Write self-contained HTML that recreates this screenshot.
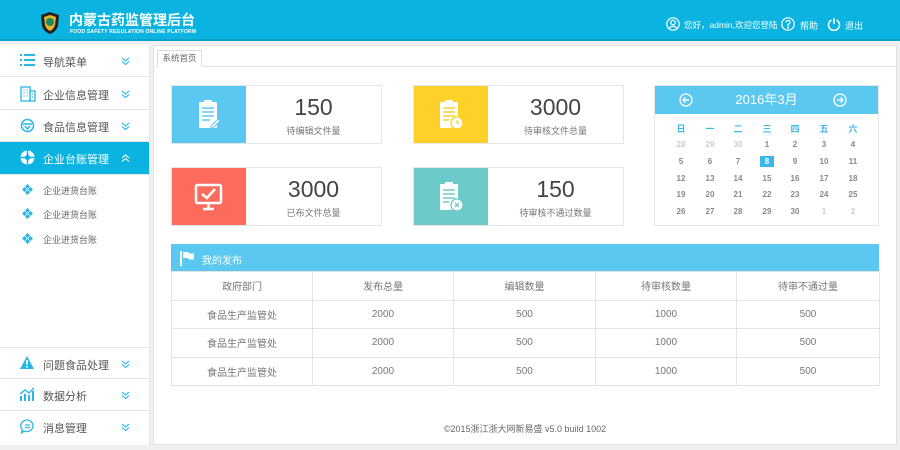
<!DOCTYPE html>
<html><head><meta charset="utf-8"><style>
*{margin:0;padding:0;box-sizing:border-box}
body{width:900px;height:450px;background:#f0f0f0;font-family:"Liberation Sans","Noto Sans CJK SC",sans-serif;position:relative;overflow:hidden;color:#555}
.hd{position:absolute;left:0;top:0;width:900px;height:41px;background:#0bb4e0;border-bottom:2px solid #0aa3cc}
.abs{position:absolute}
.side{position:absolute;left:0;top:45px;width:150px;height:400px;background:#fff;border-right:1px solid #e3e3e3}
.mi{position:absolute;left:0;width:149px;height:32px;border-bottom:1px solid #e3e3e3;font-size:11px;color:#555}
.mi .t{position:absolute;left:43px;top:9px}
.mi .ch{position:absolute;left:121px;top:12px}
.mi .ic{position:absolute;left:20px;top:8px}
.sub{position:absolute;left:43px;font-size:9px;color:#666}
.dia{position:absolute;left:22px;width:11px;height:11px}
.main{position:absolute;left:153px;top:45px;width:744px;height:400px;background:#fff;border:1px solid #e3e3e3}
.card{position:absolute;width:211px;height:59px;border:1px solid #e6e6e6;background:#fff}
.card .i{position:absolute;left:0;top:0;width:74px;height:57px}
.card .n{position:absolute;left:74px;right:0;top:8px;text-align:center;font-size:23px;color:#444}
.card .l{position:absolute;left:74px;right:0;top:38px;text-align:center;font-size:9px;color:#777}
table{position:absolute;left:171px;top:271px;width:708px;border-collapse:collapse;font-size:10px;color:#777;table-layout:fixed}
td{border:1px solid #e3e3e3;text-align:center;height:28.5px;vertical-align:middle}
.cal{position:absolute;left:654px;top:85px;width:225px;height:141px;border:1px solid #e6e6e6}
.cal .h{height:28px;background:#5bc8f0;color:#fff;font-size:13px;text-align:center;line-height:28px;position:relative}
.cg{position:absolute;left:0;font-size:8px;color:#888;font-weight:bold}
.cg span{position:absolute;width:28px;margin-left:-14px;text-align:center}
</style></head><body>
<svg width="0" height="0" style="position:absolute"><defs>
<symbol id="dn" viewBox="0 0 9 8"><path d="M1 1l3.5 3 3.5-3M1 4.5l3.5 3 3.5-3" fill="none" stroke="#29b6e6" stroke-width="1.1"/></symbol>
<symbol id="dm" viewBox="0 0 11 11"><g fill="#29b6e6"><path d="M5.5 0L8 2.5 5.5 5 3 2.5Z"/><path d="M5.5 6L8 8.5 5.5 11 3 8.5Z"/><path d="M2.5 3L5 5.5 2.5 8 0 5.5Z"/><path d="M8.5 3L11 5.5 8.5 8 6 5.5Z"/></g></symbol>
</defs></svg>
<div class="hd">
 <svg class="abs" style="left:40px;top:11px" width="20" height="24" viewBox="0 0 20 24"><path d="M10 1 L19 4 L18 15 Q16 21 10 23 Q4 21 2 15 L1 4Z" fill="#222"/><path d="M10 4 L16 6 L15 14 Q14 18 10 20 Q6 18 5 14 L4 6Z" fill="#e8b32a"/><circle cx="10" cy="11" r="4" fill="#1a8a5a"/></svg>
 <div class="abs" style="left:69px;top:10px;color:#fff;font-size:14px;font-weight:bold">内蒙古药监管理后台</div>
 <div class="abs" style="left:70px;top:29px;color:#fff;font-size:5px;font-weight:bold;letter-spacing:.2px">FOOD SAFETY REGULATION ONLINE PLATFORM</div>
 <svg class="abs" style="left:666px;top:17px" width="14" height="14" viewBox="0 0 14 14" fill="none" stroke="#fff" stroke-width="1.2"><circle cx="7" cy="7" r="6.2"/><circle cx="7" cy="5.5" r="2.3"/><path d="M3 11.5 Q7 7 11 11.5"/></svg>
 <div class="abs" style="left:684px;top:19px;color:#fff;font-size:8.5px">您好，admin,欢迎您登陆</div>
 <svg class="abs" style="left:781px;top:17px" width="14" height="14" viewBox="0 0 14 14" fill="none" stroke="#fff" stroke-width="1.2"><circle cx="7" cy="7" r="6.2"/><path d="M5 5.5 Q5 3.5 7 3.5 Q9 3.5 9 5.3 Q9 6.5 7 7.5 L7 9"/><circle cx="7" cy="10.6" r=".5" fill="#fff"/></svg>
 <div class="abs" style="left:800px;top:19px;color:#fff;font-size:9px">帮助</div>
 <svg class="abs" style="left:827px;top:17px" width="14" height="14" viewBox="0 0 14 14" fill="none" stroke="#fff" stroke-width="1.5"><path d="M4.5 3 A5.5 5.5 0 1 0 9.5 3"/><path d="M7 1 V7"/></svg>
 <div class="abs" style="left:845px;top:19px;color:#fff;font-size:9px">退出</div>
</div>

<div class="side">
 <div class="mi" style="top:0"><svg class="ic" width="15" height="14" viewBox="0 0 15 14" fill="#29b6e6"><rect x="0" y="1" width="2" height="2"/><rect x="4" y="1" width="11" height="2"/><rect x="0" y="6" width="2" height="2"/><rect x="4" y="6" width="11" height="2"/><rect x="0" y="11" width="2" height="2"/><rect x="4" y="11" width="11" height="2"/></svg><span class="t">导航菜单</span><svg class="ch" width="9" height="8"><use href="#dn"/></svg></div>
 <div class="mi" style="top:33px"><svg class="ic" width="16" height="16" viewBox="0 0 16 16" fill="none" stroke="#29b6e6" stroke-width="1.3"><rect x="1" y="1" width="9" height="14"/><rect x="10" y="5" width="5" height="10"/><path d="M3.5 4h1M6.5 4h1M3.5 7h1M6.5 7h1M3.5 10h1M6.5 10h1M12 8h1M12 11h1"/></svg><span class="t">企业信息管理</span><svg class="ch" width="9" height="8"><use href="#dn"/></svg></div>
 <div class="mi" style="top:65px"><svg class="ic" width="15" height="15" viewBox="0 0 15 15" fill="none" stroke="#29b6e6" stroke-width="1.5"><circle cx="7.5" cy="7.5" r="6"/><path d="M3 6h9M5 8l2.5 3 2.5-3"/></svg><span class="t">食品信息管理</span><svg class="ch" width="9" height="8"><use href="#dn"/></svg></div>
 <div class="mi" style="top:97px;background:#0bb4e0;color:#fff;height:33px"><svg class="ic" width="15" height="15" viewBox="0 0 15 15" fill="#fff"><circle cx="7.5" cy="7.5" r="7"/><rect x="5" y="5" width="5" height="5" fill="#0bb4e0" transform="rotate(45 7.5 7.5)"/><path d="M7.5 0v15M0 7.5h15" stroke="#0bb4e0" stroke-width="1.5"/></svg><span class="t" style="color:#fff">企业台账管理</span><svg class="ch" width="9" height="8" viewBox="0 0 9 8"><path d="M1 4l3.5-3 3.5 3M1 7.5l3.5-3 3.5 3" fill="none" stroke="#fff" stroke-width="1.1"/></svg></div>
 <svg class="dia" style="top:139px"><use href="#dm"/></svg><div class="sub" style="top:139px">企业进货台账</div>
 <svg class="dia" style="top:163px"><use href="#dm"/></svg><div class="sub" style="top:163px">企业进货台账</div>
 <svg class="dia" style="top:188px"><use href="#dm"/></svg><div class="sub" style="top:188px">企业进货台账</div>
 <div class="mi" style="top:302px;border-top:1px solid #e3e3e3"><svg class="ic" width="14" height="13" viewBox="0 0 14 13"><path d="M7 0L14 13H0Z" fill="#29b6e6"/><rect x="6.2" y="4" width="1.6" height="5" fill="#fff"/><rect x="6.2" y="10" width="1.6" height="1.6" fill="#fff"/></svg><span class="t">问题食品处理</span><svg class="ch" width="9" height="8"><use href="#dn"/></svg></div>
 <div class="mi" style="top:334px"><svg class="ic" width="15" height="14" viewBox="0 0 15 14" fill="#29b6e6"><rect x="0" y="9" width="2" height="5"/><rect x="4" y="7" width="2" height="7"/><rect x="8" y="8" width="2" height="6"/><rect x="12" y="4" width="2" height="10"/><path d="M0 7L5 3 9 6 14 1" stroke="#29b6e6" stroke-width="1.3" fill="none"/></svg><span class="t">数据分析</span><svg class="ch" width="9" height="8"><use href="#dn"/></svg></div>
 <div class="mi" style="top:366px;border-bottom:none"><svg class="ic" width="15" height="15" viewBox="0 0 15 15" fill="none" stroke="#29b6e6" stroke-width="1.3"><path d="M7.5 1A6.3 5.8 0 1 1 4 12L1.5 14 2.3 10.5A6.3 5.8 0 0 1 7.5 1Z"/><path d="M5 6h5M5 8.5h5"/></svg><span class="t">消息管理</span><svg class="ch" width="9" height="8"><use href="#dn"/></svg></div>
</div>

<div class="main">
 <div class="abs" style="left:0;top:20px;width:742px;border-top:1px solid #e3e3e3"></div>
 <div class="abs" style="left:3px;top:4px;width:45px;height:17px;border:1px solid #ddd;border-bottom:1px solid #fff;background:#fff;font-size:8.5px;color:#666;text-align:center;line-height:15px">系统首页</div>
</div>

<div class="card" style="left:171px;top:85px"><div class="i" style="background:#5bc8f2"><svg style="position:absolute;left:26px;top:14px" width="22" height="30" viewBox="0 0 22 30" fill="#fff"><rect x="6" y="0" width="8" height="3" rx="1"/><rect x="1" y="2" width="18" height="26" rx="1"/><path d="M4 8h12M4 12h12M4 16h12M4 20h8" stroke="#5bc8f2" stroke-width="1.5"/><path d="M13 26l7-7 2 2-7 7h-2z" stroke="#5bc8f2" stroke-width="1"/></svg></div><div class="n">150</div><div class="l">待编辑文件量</div></div>
<div class="card" style="left:413px;top:85px"><div class="i" style="background:#fed12a"><svg style="position:absolute;left:25px;top:14px" width="24" height="30" viewBox="0 0 24 30" fill="#fff"><rect x="6" y="0" width="8" height="3" rx="1"/><rect x="1" y="2" width="18" height="26" rx="1"/><path d="M4 8h12M4 12h12M4 16h12M4 20h6" stroke="#fed12a" stroke-width="1.5"/><circle cx="18" cy="23" r="6" stroke="#fed12a" stroke-width="1.3"/><path d="M18 20v3h2.5" stroke="#fed12a" stroke-width="1.2" fill="none"/></svg></div><div class="n">3000</div><div class="l">待审核文件总量</div></div>
<div class="card" style="left:171px;top:167px"><div class="i" style="background:#fd6b5c"><svg style="position:absolute;left:22px;top:15px" width="30" height="28" viewBox="0 0 30 28" fill="none" stroke="#fff" stroke-width="2.5"><rect x="2" y="2" width="25" height="18" rx="1.5"/><path d="M14.5 21v4M9 26h11"/><path d="M8 11l5 4 8-9"/></svg></div><div class="n">3000</div><div class="l">已布文件总量</div></div>
<div class="card" style="left:413px;top:167px"><div class="i" style="background:#6ccac9"><svg style="position:absolute;left:25px;top:14px" width="24" height="30" viewBox="0 0 24 30" fill="#fff"><rect x="6" y="0" width="8" height="3" rx="1"/><rect x="1" y="2" width="18" height="26" rx="1"/><path d="M4 8h12M4 12h12M4 16h12M4 20h6" stroke="#6ccac9" stroke-width="1.5"/><circle cx="18" cy="23" r="6" stroke="#6ccac9" stroke-width="1.3"/><path d="M16 21l4 4M20 21l-4 4" stroke="#6ccac9" stroke-width="1.3"/></svg></div><div class="n">150</div><div class="l">待审核不通过数量</div></div>

<div class="cal"><div class="h">2016年3月
 <svg style="position:absolute;left:24px;top:7px" width="14" height="14" viewBox="0 0 14 14" fill="none" stroke="#fff" stroke-width="1.3"><circle cx="7" cy="7" r="6"/><path d="M10 7H4M6.5 4.5L4 7l2.5 2.5"/></svg>
 <svg style="position:absolute;left:178px;top:7px" width="14" height="14" viewBox="0 0 14 14" fill="none" stroke="#fff" stroke-width="1.3"><circle cx="7" cy="7" r="6"/><path d="M4 7h6M7.5 4.5L10 7l-2.5 2.5"/></svg></div>
 <div class="cg" style="top:36px;color:#3bb8ea;font-size:9px"><span style="left:26px">日</span><span style="left:55px">一</span><span style="left:83px">二</span><span style="left:112px">三</span><span style="left:140px">四</span><span style="left:169px">五</span><span style="left:198px">六</span></div>
 <div class="cg" style="top:54px"><span style="left:26px;color:#ccc">28</span><span style="left:55px;color:#ccc">29</span><span style="left:83px;color:#ccc">30</span><span style="left:112px">1</span><span style="left:140px">2</span><span style="left:169px">3</span><span style="left:198px">4</span></div>
 <div class="cg" style="top:71px"><span style="left:26px">5</span><span style="left:55px">6</span><span style="left:83px">7</span><span style="left:112px;width:14px;margin-left:-7px;background:#3bb8ea;color:#fff;height:11px;line-height:11px;top:-1px">8</span><span style="left:140px">9</span><span style="left:169px">10</span><span style="left:198px">11</span></div>
 <div class="cg" style="top:88px"><span style="left:26px">12</span><span style="left:55px">13</span><span style="left:83px">14</span><span style="left:112px">15</span><span style="left:140px">16</span><span style="left:169px">17</span><span style="left:198px">18</span></div>
 <div class="cg" style="top:104px"><span style="left:26px">19</span><span style="left:55px">20</span><span style="left:83px">21</span><span style="left:112px">22</span><span style="left:140px">23</span><span style="left:169px">24</span><span style="left:198px">25</span></div>
 <div class="cg" style="top:121px"><span style="left:26px">26</span><span style="left:55px">27</span><span style="left:83px">28</span><span style="left:112px">29</span><span style="left:140px">30</span><span style="left:169px;color:#ccc">1</span><span style="left:198px;color:#ccc">2</span></div>
</div>

<div class="abs" style="left:171px;top:244px;width:708px;height:28px;background:#5bc8f2">
 <svg style="position:absolute;left:9px;top:7px" width="15" height="15" viewBox="0 0 15 15" fill="#fff"><rect x="0" y="0" width="1.8" height="15"/><path d="M3 1h5l1 1.5h5v6H9L8 7H3z"/></svg>
 <span style="position:absolute;left:31px;top:8px;font-size:10px;color:#fff">我的发布</span></div>
<table>
<colgroup><col style="width:141px"><col style="width:141px"><col style="width:142px"><col style="width:141px"><col style="width:143px"></colgroup>
<tr><td>政府部门</td><td>发布总量</td><td>编辑数量</td><td>待审核数量</td><td>待审不通过量</td></tr>
<tr><td>食品生产监管处</td><td>2000</td><td>500</td><td>1000</td><td>500</td></tr>
<tr><td>食品生产监管处</td><td>2000</td><td>500</td><td>1000</td><td>500</td></tr>
<tr><td>食品生产监管处</td><td>2000</td><td>500</td><td>1000</td><td>500</td></tr>
</table>
<div class="abs" style="left:153px;width:744px;top:422px;text-align:center;font-size:9px;color:#666">©2015浙江浙大网新易盛 v5.0 build 1002</div>
</body></html>
